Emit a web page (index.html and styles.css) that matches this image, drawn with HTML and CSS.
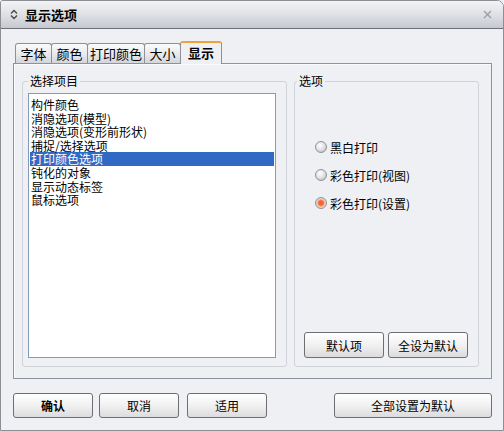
FILE: index.html
```html
<!DOCTYPE html>
<html lang="zh">
<head>
  <meta charset="UTF-8">
  <title>显示选项</title>
  <link rel="stylesheet" href="styles.css">
</head>
<body>
  <div class="window">
    <div class="titlebar">
      <svg class="title-icon" width="8" height="11" viewBox="0 0 8 11">
        <polyline points="1,4.5 4,1.5 7,4.5" />
        <polyline points="1,6.5 4,9.5 7,6.5" />
      </svg>
      <span class="title">显示选项</span>
      <svg class="close" width="9" height="9" viewBox="0 0 9 9">
        <line x1="1" y1="1" x2="8" y2="8" />
        <line x1="8" y1="1" x2="1" y2="8" />
      </svg>
    </div>

    <div class="content">
      <div class="tabs">
        <div class="tab">字体</div>
        <div class="tab">颜色</div>
        <div class="tab">打印颜色</div>
        <div class="tab">大小</div>
        <div class="tab active">显示</div>
      </div>

      <div class="panel">
        <fieldset class="group items">
          <legend>选择项目</legend>
          <ul class="list">
            <li>构件颜色</li>
            <li>消隐选项(模型)</li>
            <li>消隐选项(变形前形状)</li>
            <li>捕捉/选择选项</li>
            <li class="selected">打印颜色选项</li>
            <li>钝化的对象</li>
            <li>显示动态标签</li>
            <li>鼠标选项</li>
          </ul>
        </fieldset>

        <fieldset class="group options">
          <legend>选项</legend>
          <div class="radios">
            <label class="radio"><span class="dot"></span>黑白打印</label>
            <label class="radio"><span class="dot"></span>彩色打印(视图)</label>
            <label class="radio"><span class="dot checked"></span>彩色打印(设置)</label>
          </div>
          <div class="group-buttons">
            <button class="btn">默认项</button>
            <button class="btn">全设为默认</button>
          </div>
        </fieldset>
      </div>

      <div class="footer">
        <button class="btn bold">确认</button>
        <button class="btn">取消</button>
        <button class="btn apply">适用</button>
        <button class="btn wide">全部设置为默认</button>
      </div>
    </div>
  </div>
</body>
</html>
```

FILE: styles.css
```css
body {
  margin: 0;
  font-family: "Noto Sans CJK SC", "Liberation Sans", sans-serif;
  font-size: 12px;
  color: #000;
  background: #eef0f4;
}
.window {
  width: 504px;
  height: 431px;
  box-sizing: border-box;
  border: 1px solid #8c8e94;
  border-radius: 3px 7px 0 0;
  background: #eef0f4;
  overflow: hidden;
}
.titlebar {
  height: 27px;
  border-bottom: 1px solid #6e7077;
  background: linear-gradient(#f3f3f5, #e2e3e6 45%, #c6c9d0);
  display: flex;
  align-items: center;
  padding: 0 11px 0 9px;
}
.title-icon {
  fill: none;
  stroke: #4a4a4a;
  stroke-width: 1.4;
}
.title {
  margin-left: 7px;
  font-size: 13px;
  font-weight: bold;
  line-height: 16px;
}
.close {
  margin-left: auto;
  stroke: #a2a4aa;
  stroke-width: 1.6;
}
.content {
  padding: 12px 11px 0 12px;
}
.tabs {
  display: flex;
  align-items: flex-end;
  height: 22px;
  padding-left: 2px;
}
.tab {
  min-width: 37px;
  height: 20px;
  box-sizing: border-box;
  padding: 0 2px;
  margin-right: -1px;
  border: 1px solid #8e9096;
  border-bottom: none;
  border-radius: 3px 3px 0 0;
  background: linear-gradient(#fbfbfb, #e6e7ea 60%, #d3d5da);
  text-align: center;
  font-size: 13px;
  line-height: 19px;
}
.tab.active {
  min-width: 42px;
  height: 23px;
  margin-bottom: -1px;
  position: relative;
  z-index: 1;
  border-top: 2px solid #f0a23a;
  background: #eef0f4;
  font-weight: bold;
  line-height: 20px;
}
.panel {
  height: 316px;
  box-sizing: border-box;
  border: 1px solid #8b92a2;
  box-shadow: inset 1px 1px 0 #fafbfc;
  display: flex;
  padding: 10px 12px 11px 8px;
  gap: 7px;
}
.group {
  margin: 0;
  min-width: 0;
  border: 1px solid #cfd2d9;
  border-radius: 3px;
  display: flex;
  flex-direction: column;
}
.group legend {
  padding: 0 2px;
  font-size: 12px;
  line-height: 14px;
}
.items {
  width: 265px;
  box-sizing: border-box;
  padding: 5px 10px 8px 5px;
}
.options {
  flex: 1;
  padding: 4px 9px 8px 9px;
}
.options legend {
  margin-left: -7px;
}
.list {
  flex: 1;
  margin: 0;
  padding: 4px 1px;
  list-style: none;
  background: #fff;
  border: 1px solid #7f9db9;
}
.list li {
  line-height: 13.6px;
  height: 13.6px;
  padding-left: 1px;
  white-space: nowrap;
}
.list li.selected {
  background: #316ac5;
  color: #fff;
}
.radios {
  margin-top: 47px;
  display: flex;
  flex-direction: column;
  gap: 12px;
}
.radio {
  display: flex;
  align-items: center;
  height: 16px;
  padding-left: 11px;
  gap: 3px;
  font-size: 12px;
}
.dot {
  width: 12px;
  height: 12px;
  box-sizing: border-box;
  border-radius: 50%;
  border: 1px solid #909397;
  background: radial-gradient(circle at 40% 35%, #ffffff, #dcdde0 55%, #a9abb0);
}
.dot.checked {
  background: radial-gradient(circle at 50% 50%, #f25a22 0, #f8713c 2.5px, #f5c0a6 3.8px, #dedfe2 5px, #aeb0b5);
}
.group-buttons {
  margin-top: auto;
  display: flex;
  gap: 4px;
}
.btn {
  width: 80px;
  height: 26px;
  padding: 0;
  border: 1px solid #6e6f72;
  border-radius: 3px;
  background: linear-gradient(#ffffff, #f1f1f2 50%, #dcdcde);
  font-family: "Noto Sans CJK SC", "Liberation Sans", sans-serif;
  font-size: 12px;
  color: #000;
}
.footer {
  margin-top: 14px;
  display: flex;
  gap: 6px;
}
.footer .btn {
  width: 80px;
  height: 25px;
}
.footer .apply {
  margin-left: 2px;
}
.footer .wide {
  width: 158px;
  margin-left: auto;
}
.btn.bold {
  font-weight: bold;
}
```
